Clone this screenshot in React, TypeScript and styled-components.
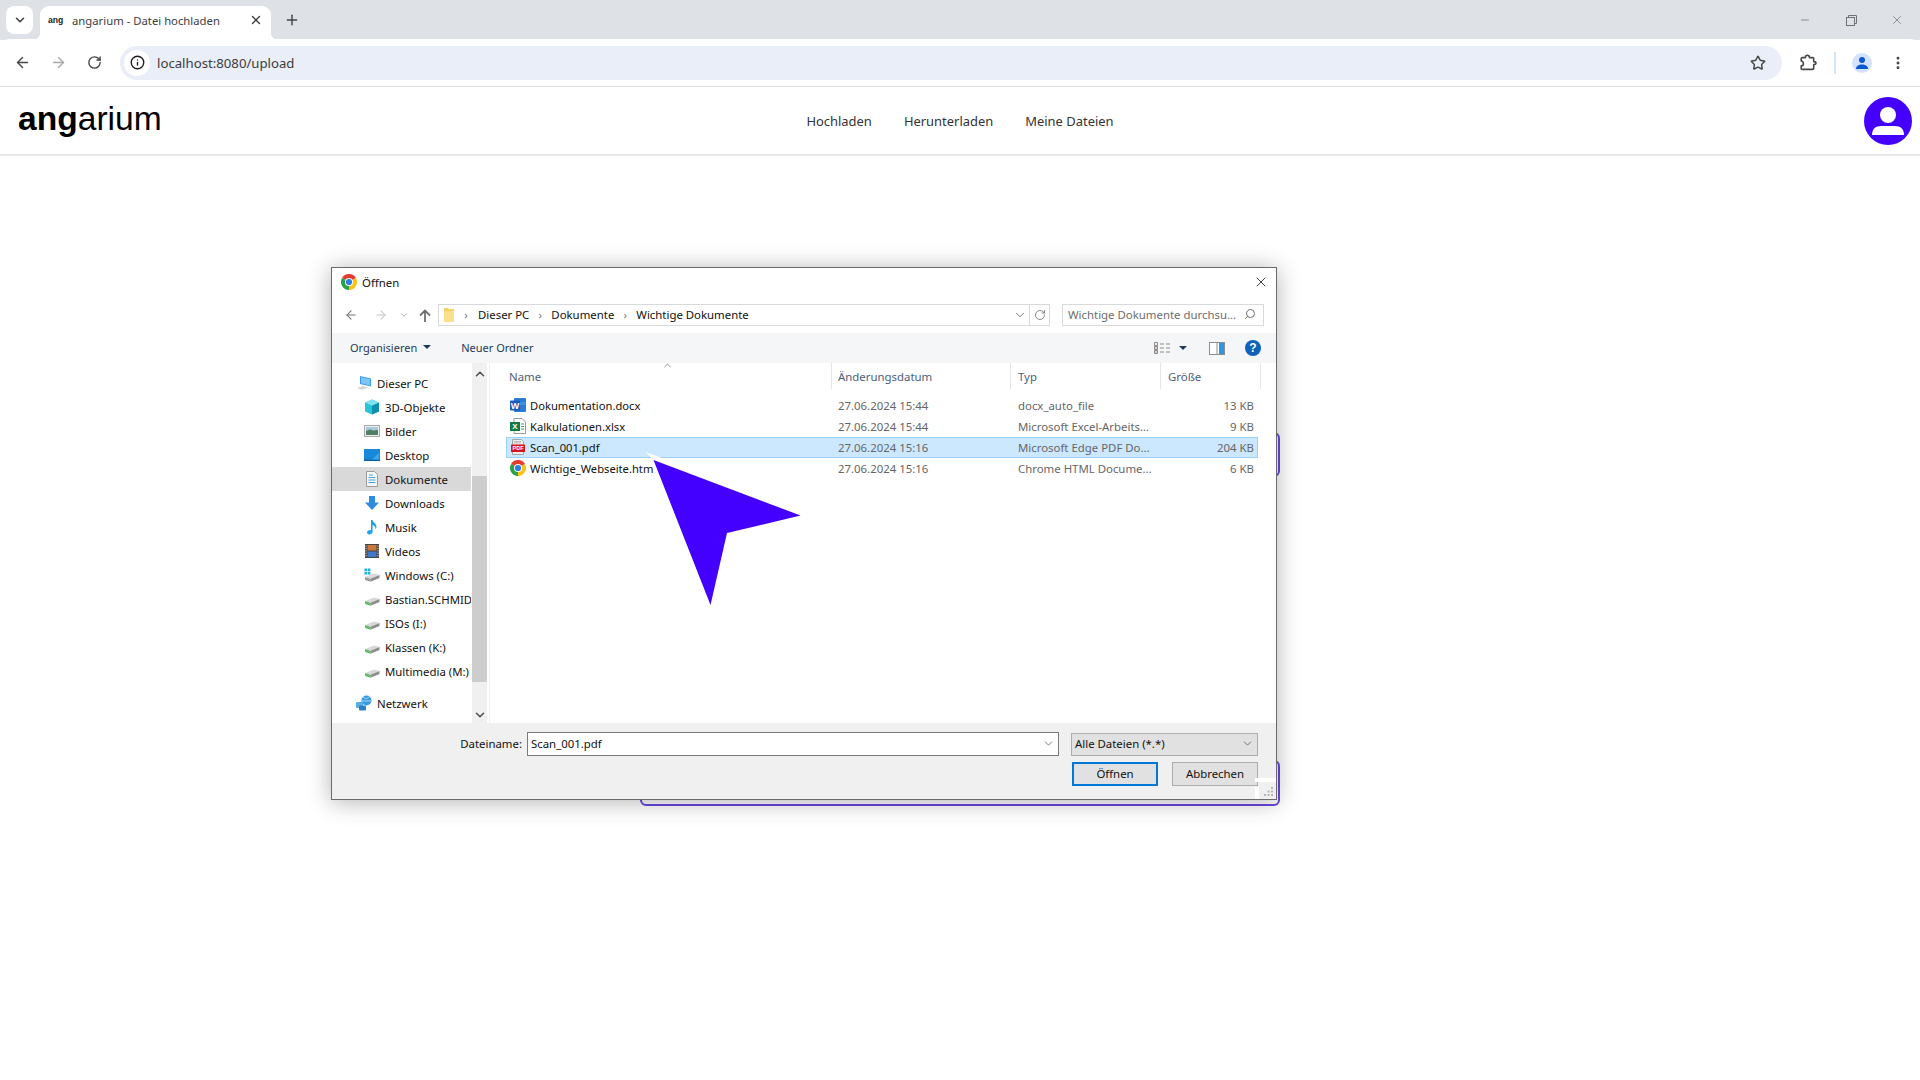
import React from "react";
import styled, { createGlobalStyle } from "styled-components";
import { ArrowLeft, ArrowRight, RotateCw, Star, EllipsisVertical, Plus, X, ChevronDown, ChevronUp, Minus, Info, Search } from "lucide-react";

const Global = createGlobalStyle`
  html, body { margin: 0; padding: 0; background: #fff; }
  body { width: 1920px; height: 1080px; overflow: hidden; font-family: "Noto Sans", "Open Sans", sans-serif; }
  * { box-sizing: border-box; }
`;

const Page = styled.div`
  position: relative;
  width: 1920px;
  height: 1080px;
  background: #fff;
  overflow: hidden;
`;

/* ---------- browser chrome ---------- */
const TabStrip = styled.div`
  height: 40px;
  background: #dee1e6;
  display: flex;
  align-items: flex-start;
  color: #3c4043;
`;
const TabSearch = styled.div`
  width: 27px;
  height: 28px;
  margin: 6px 0 0 6px;
  border-radius: 8px;
  background: #fff;
  display: flex;
  align-items: center;
  justify-content: center;
`;
const Tab = styled.div`
  position: relative;
  width: 231px;
  height: 34px;
  margin: 6px 0 0 7px;
  padding: 0 8px 6px;
  background: #fff;
  border-radius: 9px 9px 0 0;
  display: flex;
  align-items: center;
  &::before, &::after {
    content: "";
    position: absolute;
    bottom: 0;
    width: 8px;
    height: 8px;
  }
  &::before { left: -8px; background: radial-gradient(circle at 0 0, transparent 8px, #fff 8.5px); }
  &::after { right: -8px; background: radial-gradient(circle at 100% 0, transparent 8px, #fff 8.5px); }
`;
const Favicon = styled.span`
  width: 24px;
  font: bold 8.6px "Liberation Sans", sans-serif;
  color: #222;
`;
const TabTitle = styled.span`
  flex: 1;
  font-size: 11.3px;
  color: #3c4043;
  white-space: nowrap;
`;
const NewTab = styled.div`
  width: 20px;
  margin: 12px 0 0 11px;
  display: flex;
  justify-content: center;
  color: #44474a;
`;
const WindowControls = styled.div`
  margin-left: auto;
  display: flex;
  align-items: center;
  height: 40px;
  color: #6f7174;
`;
const WindowButton = styled.div`
  width: 46px;
  display: flex;
  justify-content: center;
`;
const Toolbar = styled.div`
  height: 48px;
  background: #fff;
  border-top-left-radius: 9px;
  border-top-right-radius: 9px;
  border-bottom: 1px solid #dfe1e3;
  margin-top: -1px;
  position: relative;
  display: flex;
  align-items: center;
  padding: 0 0 0 4px;
  color: #474747;
  & > * { flex: none; }
`;
const ToolIcon = styled.div<{ $w: number; $muted?: boolean }>`
  width: ${p => p.$w}px;
  display: flex;
  justify-content: center;
  color: ${p => (p.$muted ? "#a7a8aa" : "#474747")};
`;
const Omnibox = styled.div`
  width: 1662px;
  height: 34px;
  margin-left: 8px;
  padding: 0 16px 0 4px;
  border-radius: 17px;
  background: #e9eef8;
  display: flex;
  align-items: center;
`;
const InfoBadge = styled.div`
  width: 26px;
  height: 26px;
  border-radius: 50%;
  background: #fff;
  display: flex;
  align-items: center;
  justify-content: center;
  color: #1f1f1f;
`;
const Url = styled.span`
  flex: 1;
  margin-left: 7px;
  font-size: 13.2px;
  color: #3c3c3c;
`;
const ToolDivider = styled.div`
  width: 2px;
  height: 22px;
  margin: 0 16px 0 0;
  background: #d3e3fd;
`;
const ProfileBadge = styled.div`
  width: 20px;
  height: 20px;
  border-radius: 50%;
  background: #d3e3fd;
  display: flex;
  align-items: center;
  justify-content: center;
  overflow: hidden;
`;

/* ---------- web page ---------- */
const SiteHeader = styled.header`
  height: 69px;
  padding: 0 8px;
  border-bottom: 2px solid #e9e9e9;
  display: grid;
  grid-template-columns: 1fr auto 1fr;
  align-items: center;
`;
const Logo = styled.div`
  margin-left: 10px;
  font: 33.6px "Liberation Sans", sans-serif;
  color: #000;
  letter-spacing: 0;
  position: relative;
  top: -2px;
  b { font-weight: 700; }
`;
const SiteNav = styled.nav`
  display: flex;
  gap: 32px;
  font-size: 12.95px;
  color: #333;
`;
const Avatar = styled.div`
  justify-self: end;
  width: 48px;
  height: 48px;
  border-radius: 50%;
  background: #4400ff;
  display: flex;
  align-items: center;
  justify-content: center;
`;
const Main = styled.main`
  width: 640px;
  margin: 276px auto 0;
  display: flex;
  flex-direction: column;
`;
const DropBox = styled.div<{ $h: number; $mt?: number }>`
  height: ${p => p.$h}px;
  margin-top: ${p => p.$mt ?? 0}px;
  border: 2px solid #6a48e4;
  border-radius: 6px;
`;

/* ---------- file dialog ---------- */
const Dialog = styled.section`
  position: absolute;
  left: 331px;
  top: 267px;
  width: 946px;
  height: 533px;
  display: flex;
  flex-direction: column;
  background: #fff;
  border: 1px solid #6a6a6a;
  box-shadow: 0 2px 22px rgba(0, 0, 0, 0.3);
  font-family: "Noto Sans", "Open Sans", sans-serif;
  font-size: 11.4px;
  color: #111;
`;
const TitleBar = styled.div`
  height: 30px;
  padding: 0 7px 2px 9px;
  display: flex;
  align-items: center;
  gap: 5px;
  font-size: 11.4px;
`;
const TitleClose = styled.div`
  margin-left: auto;
  display: flex;
  color: #111;
`;
const NavRow = styled.div`
  height: 35px;
  padding: 6px 12px 7px 0;
  display: flex;
  align-items: center;
`;
const NavButton = styled.div<{ $w: number; $muted?: boolean }>`
  width: ${p => p.$w}px;
  display: flex;
  justify-content: center;
  color: ${p => (p.$muted ? "#c4c4c4" : "#6f6f6f")};
`;
const AddressBox = styled.div`
  width: 612px;
  height: 22px;
  margin-left: 4px;
  border: 1px solid #d9d9d9;
  display: flex;
  align-items: center;
  padding-left: 5px;
`;
const Crumb = styled.span`
  white-space: nowrap;
  position: relative;
  top: -1px;
`;
const CrumbSep = styled.span<{ $w: number }>`
  width: ${p => p.$w}px;
  display: flex;
  justify-content: center;
  color: #7a7a7a;
  position: relative;
  top: -1px;
`;
const AddressEnd = styled.div`
  margin-left: auto;
  height: 100%;
  display: flex;
  align-items: center;
  color: #6b6b6b;
`;
const RefreshCell = styled.div`
  width: 20px;
  height: 100%;
  margin-left: 2px;
  border-left: 1px solid #d9d9d9;
  display: flex;
  align-items: center;
  justify-content: center;
`;
const SearchBox = styled.div`
  width: 202px;
  height: 22px;
  margin-left: 12px;
  padding: 0 7px 2px 5px;
  border: 1px solid #d9d9d9;
  display: flex;
  align-items: center;
  justify-content: space-between;
  color: #6d6d6d;
  white-space: nowrap;
`;
const CommandBar = styled.div`
  height: 30px;
  padding: 0 15px 2px 18px;
  background: #f5f6f7;
  display: flex;
  align-items: center;
  color: #1e395b;
  font-size: 11px;
`;
const CommandItem = styled.div`
  display: flex;
  align-items: center;
  gap: 6px;
  margin-right: 30px;
`;
const Caret = styled.span<{ $before?: number; $after?: number }>`
  width: 0;
  height: 0;
  margin: 0 ${p => p.$after ?? 0}px 0 ${p => p.$before ?? 0}px;
  border-left: 4px solid transparent;
  border-right: 4px solid transparent;
  border-top: 4px solid #1e395b;
`;
const CommandRight = styled.div`
  margin: 2px 0 0 auto;
  display: flex;
  align-items: center;
`;
const HelpBadge = styled.div`
  width: 16px;
  height: 16px;
  margin-left: 20px;
  border-radius: 50%;
  background: #0f62b8;
  color: #fff;
  font: bold 12px "Liberation Sans", sans-serif;
  display: flex;
  align-items: center;
  justify-content: center;
`;
const Body = styled.div`
  height: 360px;
  display: flex;
`;
const Sidebar = styled.nav`
  width: 140px;
  padding-top: 8px;
  overflow: hidden;
`;
const SideRow = styled.div<{ $indent: number; $active?: boolean; $gap?: number }>`
  height: 24px;
  margin-top: ${p => p.$gap ?? 0}px;
  padding-left: ${p => p.$indent}px;
  width: 139px;
  background: ${p => (p.$active ? "#d9d9d9" : "transparent")};
  display: flex;
  align-items: center;
  gap: 5px;
  white-space: nowrap;
  overflow: hidden;
  svg { flex: none; }
`;
const ScrollBar = styled.div`
  width: 15px;
  margin-left: 0;
  background: #f0f0f0;
  display: flex;
  flex-direction: column;
  align-items: center;
  padding-top: 4px;
  color: #505050;
`;
const ScrollThumb = styled.div`
  width: 15px;
  height: 206px;
  margin: 95px 0 26px;
  background: #cdcdcd;
`;
const Splitter = styled.div`
  width: 3px;
  border-right: 1px solid #f0f0f0;
`;
const Files = styled.div`
  flex: 1;
  position: relative;
`;
const ColumnHeader = styled.div`
  height: 26px;
  display: grid;
  grid-template-columns: 342px 179px 150px 100px;
  color: #4c607a;
`;
const ColumnCell = styled.div<{ $pad: number }>`
  padding-left: ${p => p.$pad}px;
  border-right: 1px solid #e5e5e5;
  display: flex;
  align-items: center;
`;
const SortMark = styled.div`
  position: absolute;
  left: 172px;
  top: -3px;
  color: #6a6a6a;
  display: flex;
`;
const FileRows = styled.div`
  margin: 6px 0 0 16px;
  width: 752px;
`;
const FileRow = styled.div<{ $selected?: boolean }>`
  height: 21px;
  padding-bottom: 1px;
  display: grid;
  grid-template-columns: 325px 179px 150px 96px;
  align-items: center;
  border: 1px solid ${p => (p.$selected ? "#99d1ff" : "transparent")};
  background: ${p => (p.$selected ? "#cce8ff" : "transparent")};
  color: #666;
`;
const FileName = styled.div`
  padding-left: 3px;
  display: flex;
  align-items: center;
  gap: 4px;
  color: #111;
  font-size: 11.2px;
  white-space: nowrap;
`;
const FileMeta = styled.div<{ $pad: number; $right?: boolean }>`
  padding: ${p => (p.$right ? `0 3px 0 0` : `0 0 0 ${p.$pad}px`)};
  text-align: ${p => (p.$right ? "right" : "left")};
  white-space: nowrap;
`;
const Footer = styled.footer`
  height: 76px;
  position: relative;
  background: #f0f0f0;
  padding: 9px 18px 0 0;
`;
const FooterRow = styled.div`
  display: flex;
  justify-content: flex-end;
  align-items: center;
`;
const FieldLabel = styled.label`
  margin: 0 5px 2px 0;
`;
const NameField = styled.div`
  width: 532px;
  height: 24px;
  padding: 0 3px 2px 3px;
  border: 1px solid #7a7a7a;
  background: #fff;
  display: flex;
  align-items: center;
  justify-content: space-between;
  color: #111;
`;
const TypeField = styled.div`
  width: 187px;
  height: 23px;
  margin-left: 12px;
  padding: 0 3px 2px 3px;
  border: 1px solid #adadad;
  background: #e1e1e1;
  display: flex;
  align-items: center;
  justify-content: space-between;
`;
const ButtonRow = styled.div`
  margin-top: 6px;
  display: flex;
  justify-content: flex-end;
  gap: 14px;
`;
const DialogButton = styled.button<{ $primary?: boolean }>`
  width: 86px;
  height: 24px;
  padding: 0 0 2px;
  font: inherit;
  color: #111;
  background: #e1e1e1;
  border: ${p => (p.$primary ? "2px solid #0078d7" : "1px solid #adadad")};
`;
const Grip = styled.div`
  position: absolute;
  right: 0;
  bottom: 0;
  width: 21px;
  height: 21px;
  border-top: 4px solid #fff;
  display: flex;
  justify-content: flex-end;
  align-items: flex-end;
  padding: 0 2px 2px 0;
  &::before {
    content: "";
    position: absolute;
    left: 0;
    bottom: 0;
    width: 4px;
    height: 12px;
    background: #fff;
  }
`;
const PointerArrow = styled.svg`
  position: absolute;
  left: 640px;
  top: 445px;
  pointer-events: none;
`;

/* ---------- drawn icons ---------- */
const ChromeLogo = ({ size = 16 }: { size?: number }) => (
  <svg width={size} height={size} viewBox="0 0 16 16">
    <path d="M8 8 L14.93 4 A8 8 0 0 0 1.07 4 Z" fill="#e33b2e" />
    <path d="M8 8 L14.93 4 A8 8 0 0 1 8 16 Z" fill="#fbc116" />
    <path d="M8 8 L8 16 A8 8 0 0 1 1.07 4 Z" fill="#2aa24b" />
    <circle cx="8" cy="8" r="4" fill="#fff" />
    <circle cx="8" cy="8" r="3.1" fill="#2f7de1" />
  </svg>
);
const WordIcon = () => (
  <svg width="16" height="16" viewBox="0 0 16 16">
    <rect x="4" y="1" width="12" height="14" rx="1" fill="#2b7cd3" />
    <rect x="9" y="5" width="7" height="3" fill="#41a5ee" opacity=".6" />
    <rect x="0" y="3.5" width="10" height="10" rx="1" fill="#185abd" />
    <text x="5" y="11.6" textAnchor="middle" fontSize="9" fontWeight="700" fontFamily="Liberation Sans" fill="#fff">W</text>
  </svg>
);
const ExcelIcon = () => (
  <svg width="16" height="16" viewBox="0 0 16 16">
    <path d="M4 .5h8l3.5 3.5v11.5H4z" fill="#fff" stroke="#9a9a9a" />
    <path d="M11 6h3M11 8.5h3M11 11h3" stroke="#3f9a5f" />
    <rect x="0" y="4" width="10" height="9" fill="#107c41" />
    <text x="5" y="11.4" textAnchor="middle" fontSize="8" fontWeight="700" fontFamily="Liberation Sans" fill="#fff">X</text>
  </svg>
);
const PdfIcon = () => (
  <svg width="16" height="16" viewBox="0 0 16 16">
    <path d="M2.5.5h9l2 2v13h-11z" fill="#eee" stroke="#a5a5a5" />
    <path d="M4 2.5h7M4 4h7" stroke="#b9b9b9" />
    <rect x="1" y="5.5" width="14" height="7.5" rx=".6" fill="#d9141e" />
    <text x="8" y="11.4" textAnchor="middle" fontSize="5.6" fontWeight="700" fontFamily="Liberation Sans" fill="#fff">PDF</text>
  </svg>
);
const PcIcon = () => (
  <svg width="16" height="16" viewBox="0 0 16 16">
    <path d="M4 1l11 2.5v8L4 9z" fill="#3a9be8" />
    <path d="M5 2.2l9 2v6.2L5 8.2z" fill="#7cc6f5" />
    <path d="M1 13l6-2 5 1.6-6 2.2z" fill="#d4d4d4" />
  </svg>
);
const CubeIcon = () => (
  <svg width="16" height="16" viewBox="0 0 16 16">
    <path d="M8 .5l7 3v9l-7 3-7-3v-9z" fill="#2bc4d6" />
    <path d="M8 6.5l7-3v9l-7 3z" fill="#0e8fb0" />
    <path d="M8 6.5L1 3.5l7-3 7 3z" fill="#7fe3ee" />
  </svg>
);
const PictureIcon = () => (
  <svg width="16" height="16" viewBox="0 0 16 16">
    <rect x=".5" y="2.5" width="15" height="11" fill="#f1f1f1" stroke="#a6a6a6" />
    <rect x="2" y="4" width="12" height="4" fill="#a8c8de" />
    <path d="M2 8l4-1.5 3 1 5-.6V12H2z" fill="#4f7f66" />
  </svg>
);
const DesktopIcon = () => (
  <svg width="16" height="16" viewBox="0 0 16 16">
    <rect x="0" y="2" width="16" height="12" fill="#1a88d8" />
    <rect x="0" y="12.7" width="16" height="1.3" fill="#0c5da0" />
    <path d="M8 12.5L15 6v6.5z" fill="#38a5ee" />
  </svg>
);
const DocsIcon = () => (
  <svg width="16" height="16" viewBox="0 0 16 16">
    <path d="M2.5.5h8l3 3v12h-11z" fill="#f6f6f6" stroke="#9b9b9b" />
    <path d="M5 4h4M4.5 6.5h7M4.5 9h7M4.5 11.5h7" stroke="#4ba3dc" strokeWidth="1.1" />
  </svg>
);
const DownloadIcon = () => (
  <svg width="16" height="16" viewBox="0 0 16 16">
    <path d="M5 1h6v6.5h4L8 15 1 7.5h4z" fill="#2f8be0" />
  </svg>
);
const MusicIcon = () => (
  <svg width="16" height="16" viewBox="0 0 16 16">
    <path d="M7 1h1.6c.3 2.6 3.8 3.2 3.9 6.5 0 1-.4 1.9-1 2.7.2-2.3-1.2-3.5-2.9-4.1V12.6c0 1.6-1.5 2.9-3.2 2.9C3.9 15.5 3 14.7 3 13.6c0-1.4 1.6-2.6 3.3-2.6.3 0 .5 0 .7.1z" fill="#1fa4ec" />
  </svg>
);
const FilmIcon = () => (
  <svg width="16" height="16" viewBox="0 0 16 16">
    <rect x="1" y="1" width="14" height="14" fill="#444" />
    <rect x="3.5" y="2" width="9" height="5.5" fill="#c9783a" />
    <rect x="3.5" y="8.5" width="9" height="5.5" fill="#3f78c9" />
    <path d="M2 2.5v11M14 2.5v11" stroke="#ddd" strokeDasharray="1.2 1.2" />
  </svg>
);
const DriveIcon = ({ kind }: { kind: "win" | "net" }) => (
  <svg width="16" height="16" viewBox="0 0 16 16">
    <path d="M1 10l9-3.5L15.5 8l-9 3.7z" fill="#d9d9d9" />
    <path d="M1 10l5.5 1.7v3L1 13z" fill={kind === "net" ? "#5fc26b" : "#9c9c9c"} />
    <path d="M6.5 11.7l9-3.7v3l-9 3.7z" fill="#8c8c8c" />
    {kind === "win" && <path d="M.5 1.5h2.6v2.6H.5zM3.8 1.5h2.6v2.6H3.8zM.5 4.8h2.6v2.6H.5zM3.8 4.8h2.6v2.6H3.8z" fill="#18b2ee" />}
  </svg>
);
const NetworkIcon = () => (
  <svg width="16" height="16" viewBox="0 0 16 16">
    <circle cx="10.5" cy="5.5" r="5" fill="#3c9be0" />
    <path d="M7 2l3 2 3-2M6 6h9" stroke="#9ed2f5" fill="none" />
    <rect x="0" y="7" width="7" height="6" rx="1" fill="#59aee8" />
    <rect x="3" y="10.5" width="7" height="5" rx="1" fill="#2d7fc4" />
  </svg>
);
const PuzzleIcon = () => (
  <svg width="18" height="18" viewBox="0 0 18 18" fill="none" stroke="#474747" strokeWidth="1.6" strokeLinejoin="round">
    <path d="M3 3.6h3.4c0-1.7 1-2.4 2-2.4s2 .7 2 2.4h3.3a1 1 0 0 1 1 1v3c1.7 0 2.3 .7 2.3 1.5s-.6 1.5-2.3 1.5v3.8a1 1 0 0 1-1 1H3.2a1 1 0 0 1-1-1v-2.5c1.3 0 2.2-.8 2.2-1.900S3.900 7 2.200 7V4.500z" />
  </svg>
);
const RestoreIcon = () => (
  <svg width="11" height="11" viewBox="0 0 11 11" fill="none" stroke="currentColor">
    <rect x=".5" y="2.5" width="8" height="8" />
    <path d="M2.500 2.500V.5h8v8H8.500" />
  </svg>
);
const FolderIcon = () => (
  <svg width="10" height="15" viewBox="0 0 10 15">
    <path d="M0 0h4l1 1h5v12H0z" fill="#f6d365" />
    <path d="M0 3h10v11H0z" fill="#fbe08c" />
  </svg>
);
const ViewIcon = () => (
  <svg width="16" height="12" viewBox="0 0 16 12" fill="none">
    <path d="M.5 .5h3v3h-3zM.5 4.500h3v3h-3zM.5 8.500h3v3h-3z" stroke="#8a8a8a" />
    <path d="M6 2h4M12 2h4M6 6h4M12 6h4M6 10h4M12 10h4" stroke="#8a8a8a" />
    <rect x="1.500" y="5.500" width="1" height="1" fill="#c0392b" />
    <rect x="1.500" y="9.500" width="1" height="1" fill="#c0392b" />
  </svg>
);
const PaneIcon = () => (
  <svg width="16" height="13" viewBox="0 0 16 13">
    <rect x=".5" y=".5" width="15" height="12" fill="#fff" stroke="#8d8d8d" />
    <rect x="10" y="1" width="5" height="11" fill="#2f95e6" />
    <rect x="7.500" y="1" width="1" height="11" fill="#8d8d8d" />
  </svg>
);
const GripDots = () => (
  <svg width="10" height="10" viewBox="0 0 10 10" fill="#b5b5b5">
    <rect x="7" y="0" width="2" height="2" />
    <rect x="3.500" y="3.500" width="2" height="2" />
    <rect x="7" y="3.500" width="2" height="2" />
    <rect x="0" y="7" width="2" height="2" />
    <rect x="3.500" y="7" width="2" height="2" />
    <rect x="7" y="7" width="2" height="2" />
  </svg>
);

const sideItems: { label: string; icon: React.ReactNode; indent?: number; active?: boolean; gap?: number }[] = [
  { label: "Dieser PC", icon: <PcIcon />, indent: 24 },
  { label: "3D-Objekte", icon: <CubeIcon /> },
  { label: "Bilder", icon: <PictureIcon /> },
  { label: "Desktop", icon: <DesktopIcon /> },
  { label: "Dokumente", icon: <DocsIcon />, active: true },
  { label: "Downloads", icon: <DownloadIcon /> },
  { label: "Musik", icon: <MusicIcon /> },
  { label: "Videos", icon: <FilmIcon /> },
  { label: "Windows (C:)", icon: <DriveIcon kind="win" /> },
  { label: "Bastian.SCHMID", icon: <DriveIcon kind="net" /> },
  { label: "ISOs (I:)", icon: <DriveIcon kind="net" /> },
  { label: "Klassen (K:)", icon: <DriveIcon kind="net" /> },
  { label: "Multimedia (M:)", icon: <DriveIcon kind="net" /> },
  { label: "Netzwerk", icon: <NetworkIcon />, indent: 24, gap: 8 },
];

const files = [
  { name: "Dokumentation.docx", icon: <WordIcon />, date: "27.06.2024 15:44", type: "docx_auto_file", size: "13 KB" },
  { name: "Kalkulationen.xlsx", icon: <ExcelIcon />, date: "27.06.2024 15:44", type: "Microsoft Excel-Arbeits...", size: "9 KB" },
  { name: "Scan_001.pdf", icon: <PdfIcon />, date: "27.06.2024 15:16", type: "Microsoft Edge PDF Do...", size: "204 KB", selected: true },
  { name: "Wichtige_Webseite.htm", icon: <ChromeLogo />, date: "27.06.2024 15:16", type: "Chrome HTML Docume...", size: "6 KB" },
];

export default function App() {
  return (
    <Page>
      <Global />
      <TabStrip>
        <TabSearch><ChevronDown size={14} strokeWidth={2.6} /></TabSearch>
        <Tab>
          <Favicon>ang</Favicon>
          <TabTitle>angarium - Datei hochladen</TabTitle>
          <X size={14} strokeWidth={2.4} color="#3c4043" />
        </Tab>
        <NewTab><Plus size={16} strokeWidth={2.2} /></NewTab>
        <WindowControls>
          <WindowButton><Minus size={12} strokeWidth={1.5} /></WindowButton>
          <WindowButton><RestoreIcon /></WindowButton>
          <WindowButton><X size={14} strokeWidth={1.2} /></WindowButton>
        </WindowControls>
      </TabStrip>
      <Toolbar>
        <ToolIcon $w={36}><ArrowLeft size={17} strokeWidth={2} /></ToolIcon>
        <ToolIcon $w={36} $muted><ArrowRight size={17} strokeWidth={2} /></ToolIcon>
        <ToolIcon $w={36}><RotateCw size={15} strokeWidth={2.2} /></ToolIcon>
        <Omnibox>
          <InfoBadge><Info size={15} strokeWidth={2.2} /></InfoBadge>
          <Url>localhost:8080/upload</Url>
          <Star size={16} strokeWidth={2.2} color="#474747" />
        </Omnibox>
        <ToolIcon $w={52}><PuzzleIcon /></ToolIcon>
        <ToolDivider />
        <ProfileBadge>
          <svg width="14" height="14" viewBox="0 0 14 14" fill="#0b57d0">
            <circle cx="7" cy="4" r="3" />
            <path d="M1 13c0-3 2.500-4.500 6-4.500s6 1.500 6 4.500z" />
          </svg>
        </ProfileBadge>
        <ToolIcon $w={52}><EllipsisVertical size={16} strokeWidth={2.4} /></ToolIcon>
      </Toolbar>
      <SiteHeader>
        <Logo><b>ang</b>arium</Logo>
        <SiteNav>
          <span>Hochladen</span>
          <span>Herunterladen</span>
          <span>Meine Dateien</span>
        </SiteNav>
        <Avatar>
          <svg width="34" height="30" viewBox="0 0 34 30" fill="#fff">
            <circle cx="17" cy="9" r="8" />
            <path d="M1 29c0-6 3.500-9 9-9h14c5.500 0 9 3 9 9z" />
          </svg>
        </Avatar>
      </SiteHeader>
      <Main>
        <DropBox $h={45} />
        <DropBox $h={46} $mt={283} />
      </Main>

      <Dialog>
        <TitleBar>
          <ChromeLogo />
          <span>Öffnen</span>
          <TitleClose><X size={16} strokeWidth={1.2} /></TitleClose>
        </TitleBar>
        <NavRow>
          <NavButton $w={38}><ArrowLeft size={14} strokeWidth={1.8} /></NavButton>
          <NavButton $w={22} $muted><ArrowRight size={14} strokeWidth={1.8} /></NavButton>
          <NavButton $w={24}><ChevronDown size={10} strokeWidth={2} color="#9a9a9a" /></NavButton>
          <NavButton $w={18}><svg width="12" height="13" viewBox="0 0 12 13" fill="none" stroke="#6f6f6f" strokeWidth="1.800"><path d="M6 13V1.500M1 6.500l5-5 5 5" /></svg></NavButton>
          <AddressBox>
            <FolderIcon />
            <CrumbSep $w={24}>›</CrumbSep>
            <Crumb>Dieser PC</Crumb>
            <CrumbSep $w={22}>›</CrumbSep>
            <Crumb>Dokumente</Crumb>
            <CrumbSep $w={22}>›</CrumbSep>
            <Crumb>Wichtige Dokumente</Crumb>
            <AddressEnd>
              <ChevronDown size={14} strokeWidth={1.6} />
              <RefreshCell><RotateCw size={12} strokeWidth={1.6} /></RefreshCell>
            </AddressEnd>
          </AddressBox>
          <SearchBox>
            <span>Wichtige Dokumente durchsu...</span>
            <Search size={12} strokeWidth={2} style={{ transform: "scaleX(-1)" }} />
          </SearchBox>
        </NavRow>
        <CommandBar>
          <CommandItem>Organisieren <Caret /></CommandItem>
          <CommandItem>Neuer Ordner</CommandItem>
          <CommandRight>
            <ViewIcon />
            <Caret $before={9} $after={22} />
            <PaneIcon />
            <HelpBadge>?</HelpBadge>
          </CommandRight>
        </CommandBar>
        <Body>
          <Sidebar>
            {sideItems.map(item => (
              <SideRow key={item.label} $indent={item.indent ?? 32} $active={item.active} $gap={item.gap}>
                {item.icon}
                {item.label}
              </SideRow>
            ))}
          </Sidebar>
          <ScrollBar>
            <ChevronUp size={14} strokeWidth={2.6} />
            <ScrollThumb />
            <ChevronDown size={14} strokeWidth={2.6} />
          </ScrollBar>
          <Splitter />
          <Files>
            <SortMark><ChevronUp size={11} strokeWidth={1.6} /></SortMark>
            <ColumnHeader>
              <ColumnCell $pad={19}>Name</ColumnCell>
              <ColumnCell $pad={6}>Änderungsdatum</ColumnCell>
              <ColumnCell $pad={7}>Typ</ColumnCell>
              <ColumnCell $pad={7}>Größe</ColumnCell>
            </ColumnHeader>
            <FileRows>
              {files.map(f => (
                <FileRow key={f.name} $selected={f.selected}>
                  <FileName>{f.icon}{f.name}</FileName>
                  <FileMeta $pad={6}>{f.date}</FileMeta>
                  <FileMeta $pad={7}>{f.type}</FileMeta>
                  <FileMeta $pad={0} $right>{f.size}</FileMeta>
                </FileRow>
              ))}
            </FileRows>
          </Files>
        </Body>
        <Footer>
          <FooterRow>
            <FieldLabel>Dateiname:</FieldLabel>
            <NameField>Scan_001.pdf<ChevronDown size={13} strokeWidth={1.4} color="#555" /></NameField>
            <TypeField>Alle Dateien (*.*)<ChevronDown size={13} strokeWidth={1.4} color="#555" /></TypeField>
          </FooterRow>
          <ButtonRow>
            <DialogButton $primary>Öffnen</DialogButton>
            <DialogButton>Abbrechen</DialogButton>
          </ButtonRow>
          <Grip><GripDots /></Grip>
        </Footer>
      </Dialog>

      <PointerArrow width="170" height="170" viewBox="640 445 170 170">
        <polygon points="646,452 663,458.500 653.500,460.500" fill="#fff" />
        <polygon points="653.500,460 800.500,515.500 727,533 710.500,605" fill="#4400ff" />
      </PointerArrow>
    </Page>
  );
}
